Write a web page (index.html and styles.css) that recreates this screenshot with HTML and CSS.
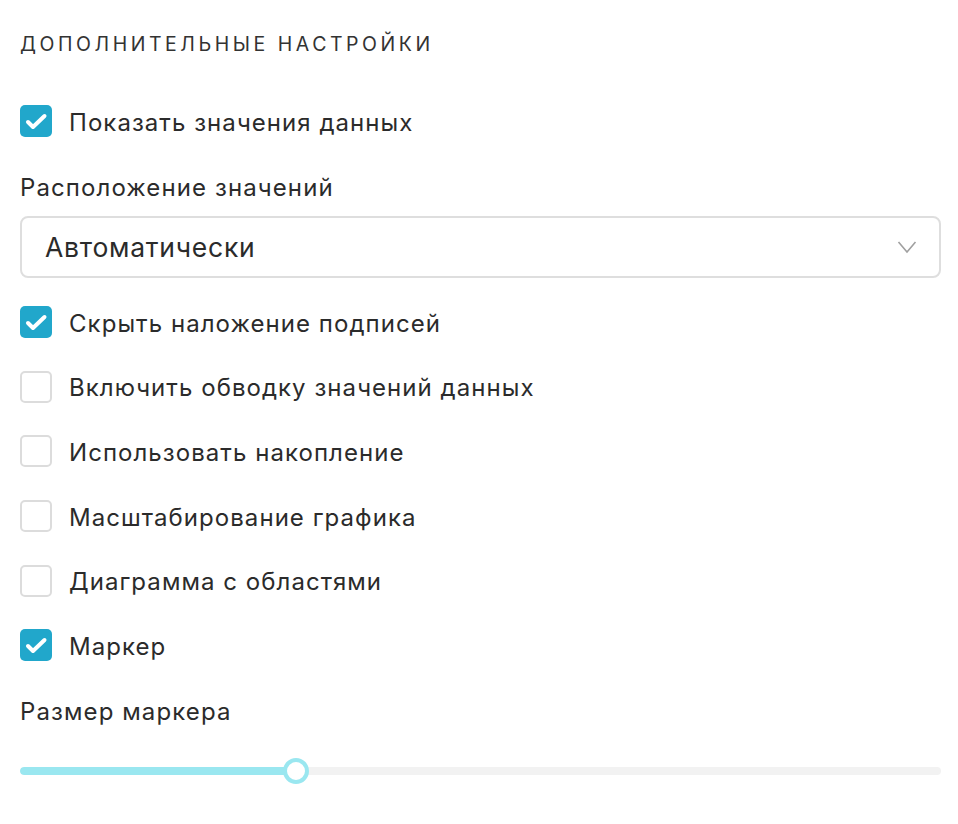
FILE: index.html
```html
<!DOCTYPE html>
<html lang="ru">
<head>
<meta charset="utf-8">
<link rel="stylesheet" href="styles.css">
</head>
<body>
<div class="panel">
  <h2 class="title">Дополнительные настройки</h2>

  <label class="check first checked"><span class="box"><svg viewBox="0 0 32 32"><path d="M8 17l5 5 L24.5 11"/></svg></span><span class="text">Показать значения данных</span></label>

  <div class="field-label">Расположение значений</div>
  <div class="select"><span class="value">Автоматически</span><svg class="chev" viewBox="0 0 20 14"><path d="M1.5 2l8.5 10 8.5-10"/></svg></div>

  <div class="checks">
    <label class="check checked"><span class="box"><svg viewBox="0 0 32 32"><path d="M8 17l5 5 L24.5 11"/></svg></span><span class="text">Скрыть наложение подписей</span></label>
    <label class="check"><span class="box"></span><span class="text">Включить обводку значений данных</span></label>
    <label class="check"><span class="box"></span><span class="text">Использовать накопление</span></label>
    <label class="check"><span class="box"></span><span class="text">Масштабирование графика</span></label>
    <label class="check"><span class="box"></span><span class="text">Диаграмма с областями</span></label>
    <label class="check checked"><span class="box"><svg viewBox="0 0 32 32"><path d="M8 17l5 5 L24.5 11"/></svg></span><span class="text">Маркер</span></label>
  </div>

  <div class="field-label size">Размер маркера</div>
  <div class="slider">
    <div class="track"><div class="fill" style="width: 276px"></div></div>
    <div class="thumb" style="left: 263px"></div>
  </div>
</div>
</body>
</html>
```

FILE: styles.css
```css
html, body {
  margin: 0;
  padding: 0;
  background: #ffffff;
}

body {
  font-family: Inter, "Noto Sans", "Liberation Sans", sans-serif;
  color: #2b2b2b;
}

.panel {
  padding: 29px 17px 0 20px;
  display: flex;
  flex-direction: column;
}

.title {
  margin: 0;
  height: 30px;
  line-height: 30px;
  font-size: 19.5px;
  font-weight: 400;
  letter-spacing: 3.55px;
  text-transform: uppercase;
  color: #333333;
}

.check {
  display: flex;
  align-items: center;
  gap: 17px;
  height: 32px;
}

.check.first {
  margin-top: 46px;
}

.box {
  width: 32px;
  height: 32px;
  box-sizing: border-box;
  border: 2px solid #dcdcdc;
  border-radius: 5px;
  background: #fff;
  display: flex;
  flex-shrink: 0;
}

.check.checked .box {
  background: #21a7cb;
  border: 0;
}

.box svg {
  width: 32px;
  height: 32px;
}

.box path {
  fill: none;
  stroke: #ffffff;
  stroke-width: 4;
  stroke-linecap: round;
  stroke-linejoin: round;
}

.text {
  margin-top: 3px;
  font-size: 24px;
  line-height: 30px;
  letter-spacing: 1.05px;
  color: #2b2b2b;
}

.field-label {
  margin-top: 36px;
  font-size: 24px;
  line-height: 30px;
  letter-spacing: 1.1px;
  color: #2b2b2b;
}

.field-label.size {
  margin-top: 35.5px;
}

.select {
  margin-top: 13px;
  height: 62px;
  box-sizing: border-box;
  border: 2px solid #dedede;
  border-radius: 8px;
  display: flex;
  align-items: center;
  justify-content: space-between;
  padding: 0 22px 0 23px;
}

.select .value {
  font-size: 26.5px;
  line-height: 30px;
  letter-spacing: 0.75px;
  color: #2b2b2b;
}

.chev {
  width: 20px;
  height: 14px;
}

.chev path {
  fill: none;
  stroke: #a0a0a0;
  stroke-width: 1.6;
}

.checks {
  margin-top: 28px;
  display: flex;
  flex-direction: column;
  gap: 32.7px;
}

.slider {
  position: relative;
  margin-top: 31px;
  height: 26px;
  display: flex;
  align-items: center;
}

.track {
  flex: 1;
  height: 8px;
  border-radius: 4px;
  background: #f2f2f2;
  overflow: hidden;
}

.fill {
  height: 100%;
  background: #9ae7f0;
  border-radius: 4px;
}

.thumb {
  position: absolute;
  top: 0;
  width: 26px;
  height: 26px;
  box-sizing: border-box;
  border: 4px solid #9ae7f0;
  border-radius: 50%;
  background: #ffffff;
}
```
